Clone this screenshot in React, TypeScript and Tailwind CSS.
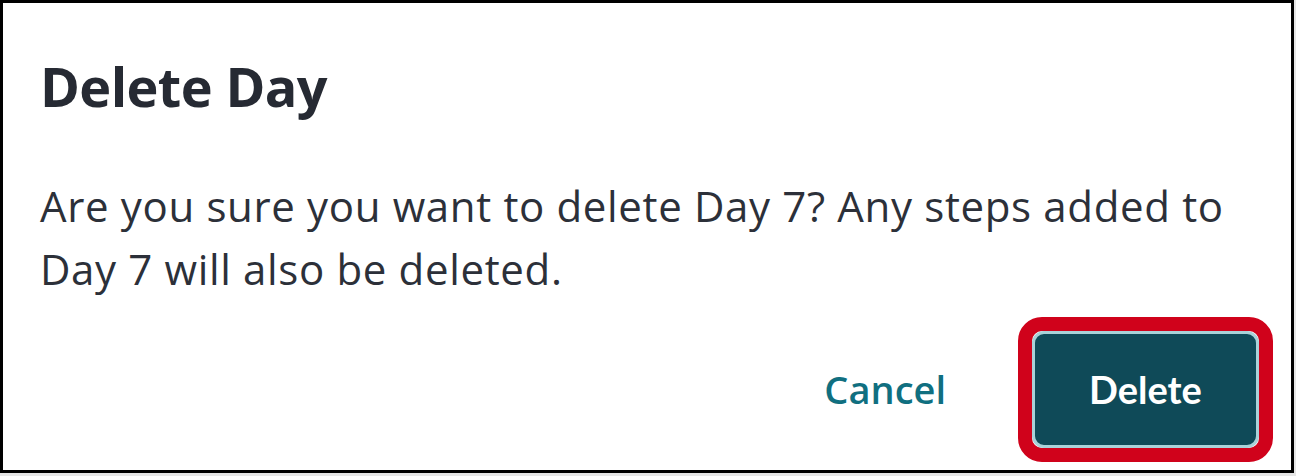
export default function App() {
  return (
    <div className="w-[1296px] h-[476px] bg-[#e6e6e6]">
      <div className="w-[1294px] h-[473px] bg-white border-[3px] border-black flex flex-col pt-[56px] pl-[37px] pr-[18px]">
        <h2 className="font-['Open_Sans',sans-serif] font-bold text-[54px] leading-[54px] tracking-[-0.6px] text-[#262a33]">
          Delete Day
        </h2>
        <p className="mt-[61px] w-[1210px] font-['Open_Sans',sans-serif] text-[42px] leading-[63px] tracking-[0.65px] text-[#2c3039]">
          Are you sure you want to delete Day 7? Any steps added to Day 7 will also be deleted.
        </p>
        <div className="mt-[17px] flex items-center justify-end">
          <button className="mr-[72px] font-['Open_Sans',sans-serif] font-semibold text-[38px] text-[#106f80]">
            Cancel
          </button>
          {/* red highlight round the confirm button */}
          <div className="border-[14px] border-[#d0021b] rounded-[24px]">
            <button className="w-[227px] h-[117px] rounded-[12px] border-[3px] border-[#a9d2d9] bg-[#0f4a58] flex items-center justify-center font-['Lato',sans-serif] font-bold text-[38px] text-white">
              Delete
            </button>
          </div>
        </div>
      </div>
    </div>
  );
}
